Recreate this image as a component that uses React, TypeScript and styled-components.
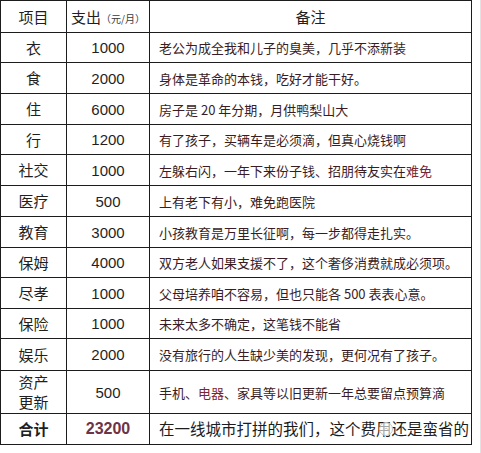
import React from "react";
import styled, { createGlobalStyle } from "styled-components";

const Global = createGlobalStyle`
  html, body { margin: 0; padding: 0; background: #ffffff; }
  body { font-family: "Noto Sans CJK SC", "Liberation Sans", sans-serif; }
`;

const Page = styled.div`
  width: 480px;
  height: 453px;
  border-right: 1px solid #e2e2e2;
  background: #fff;
`;

const Table = styled.table`
  width: 471px;
  border-collapse: collapse;
  table-layout: fixed;
  border: 1px solid #1c1c1c;
`;

const Row = styled.tr<{ $h: number }>`
  height: ${(p) => p.$h}px;
`;

const Cell = styled.td`
  border: 1px solid #1c1c1c;
  padding: 0;
  vertical-align: middle;
  line-height: 1;
`;

const ItemCell = styled(Cell)<{ $bold?: boolean }>`
  text-align: center;
  font-family: "Noto Sans CJK SC", sans-serif;
  font-size: 15px;
  color: #1f1f1f;
  font-weight: ${(p) => (p.$bold ? 700 : 400)};
  line-height: 20px;
`;

const AmountCell = styled(Cell)<{ $total?: boolean }>`
  text-align: center;
  font-family: "Liberation Sans", "Noto Sans CJK SC", sans-serif;
  font-size: ${(p) => (p.$total ? 16 : 15)}px;
  font-weight: ${(p) => (p.$total ? 700 : 400)};
  color: ${(p) => (p.$total ? "#6e3346" : "#1f1f1f")};
`;

const NoteCell = styled(Cell)<{ $dark?: boolean }>`
  position: relative;
  text-align: left;
  padding-left: 9px;
  font-family: "Noto Sans CJK SC", sans-serif;
  font-size: ${(p) => (p.$dark ? 15.5 : 13)}px;
  color: ${(p) => (p.$dark ? "#1c1c1c" : "#3a1c24")};
  white-space: nowrap;
  overflow: hidden;
`;

const HeadCell = styled(Cell)`
  text-align: center;
  font-family: "Noto Sans CJK SC", sans-serif;
  font-size: 15px;
  color: #1f1f1f;
`;

const Unit = styled.span`
  font-size: 10px;
  color: #3a3a3a;
`;

const Red = styled.span`
  color: #7a2535;
`;

const Watermark = styled.svg`
  position: absolute;
  left: 228px;
  top: 50%;
  transform: translateY(-50%);
`;

type Item = { name: React.ReactNode; amount: string; note: React.ReactNode; h: number };

const items: Item[] = [
  { name: "衣", amount: "1000", note: "老公为成全我和儿子的臭美，几乎不添新装", h: 30 },
  { name: "食", amount: "2000", note: "身体是革命的本钱，吃好才能干好。", h: 31 },
  { name: "住", amount: "6000", note: "房子是 20 年分期，月供鸭梨山大", h: 31 },
  { name: "行", amount: "1200", note: "有了孩子，买辆车是必须滴，但真心烧钱啊", h: 30 },
  {
    name: "社交",
    amount: "1000",
    note: (
      <>
        左躲右闪，一年下来份子钱、招朋待友实在<Red>难免</Red>
      </>
    ),
    h: 31,
  },
  { name: "医疗", amount: "500", note: "上有老下有小，难免跑医院", h: 31 },
  { name: "教育", amount: "3000", note: "小孩教育是万里长征啊，每一步都得走扎实。", h: 31 },
  { name: "保姆", amount: "4000", note: "双方老人如果支援不了，这个奢侈消费就成必须项。", h: 30 },
  { name: "尽孝", amount: "1000", note: "父母培养咱不容易，但也只能各 500 表表心意。", h: 31 },
  { name: "保险", amount: "1000", note: "未来太多不确定，这笔钱不能省", h: 30 },
  { name: "娱乐", amount: "2000", note: "没有旅行的人生缺少美的发现，更何况有了孩子。", h: 32 },
  {
    name: (
      <>
        资产
        <br />
        更新
      </>
    ),
    amount: "500",
    note: (
      <>
        手机、<Red>电器</Red>、家具等以旧更新一年总要留点预算滴
      </>
    ),
    h: 43,
  },
];

export default function App() {
  return (
    <>
      <Global />
      <Page>
        <Table>
          <colgroup>
            <col style={{ width: 66 }} />
            <col style={{ width: 83 }} />
            <col style={{ width: 322 }} />
          </colgroup>
          <tbody>
            <Row $h={32}>
              <HeadCell>项目</HeadCell>
              <HeadCell>
                支出<Unit>（元/月）</Unit>
              </HeadCell>
              <HeadCell>备注</HeadCell>
            </Row>
            {items.map((it, i) => (
              <Row $h={it.h} key={i}>
                <ItemCell>{it.name}</ItemCell>
                <AmountCell>{it.amount}</AmountCell>
                <NoteCell>{it.note}</NoteCell>
              </Row>
            ))}
            <Row $h={31}>
              <ItemCell $bold>合计</ItemCell>
              <AmountCell $total>23200</AmountCell>
              <NoteCell $dark>
                在一线城市打拼的我们，这个费用还是蛮省的
                <Watermark width="16" height="16" viewBox="0 0 16 16">
                  <circle cx="8" cy="8" r="6.5" fill="rgba(255,255,255,0.6)" stroke="#c4c4c4" strokeWidth="1" />
                  <path d="M5 9.5 Q8 5 11 9.5" fill="none" stroke="#c4c4c4" strokeWidth="1" />
                </Watermark>
              </NoteCell>
            </Row>
          </tbody>
        </Table>
      </Page>
    </>
  );
}
